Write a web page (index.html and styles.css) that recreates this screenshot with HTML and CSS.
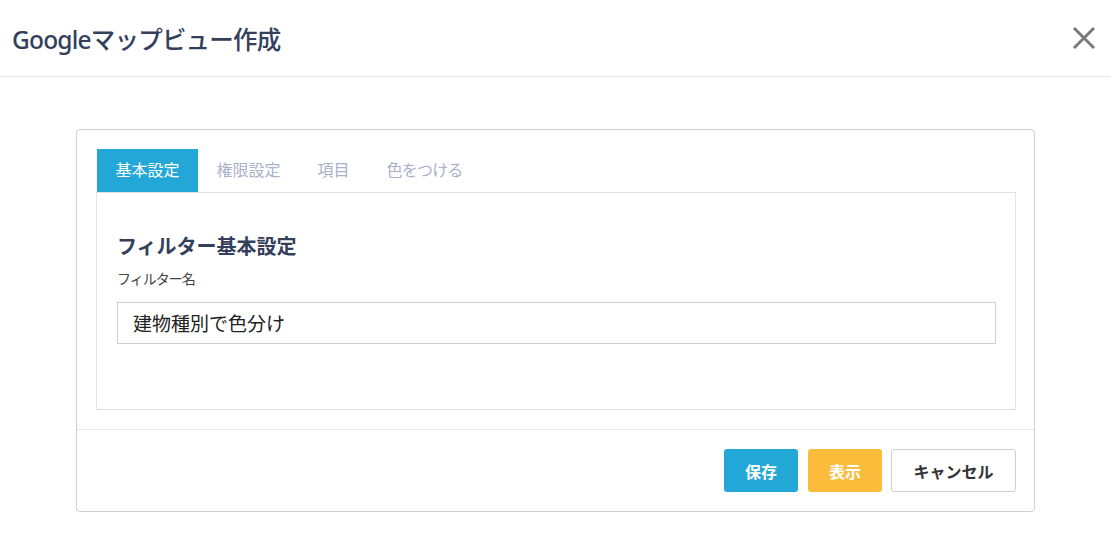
FILE: index.html
```html
<!DOCTYPE html>
<html lang="ja">
<head>
  <meta charset="UTF-8" />
  <meta name="viewport" content="width=device-width, initial-scale=1.0"/>
  <title>Googleマップビュー作成</title>
  <link rel="stylesheet" href="styles.css">
</head>
<body>
  <div class="modal-header">
    <h1 class="modal-title">Googleマップビュー作成</h1>
    <button class="close-btn" aria-label="閉じる">
      <svg width="24" height="24" viewBox="0 0 24 24">
        <path d="M2 2 L22 22 M22 2 L2 22" stroke="#7a7a7a" stroke-width="3" fill="none"/>
      </svg>
    </button>
  </div>

  <div class="modal-body">
    <div class="card">
      <div class="card-body">
        <ul class="tabs">
          <li class="tab active">基本設定</li>
          <li class="tab">権限設定</li>
          <li class="tab">項目</li>
          <li class="tab">色をつける</li>
        </ul>
        <div class="tab-pane">
          <h3 class="section-title">フィルター基本設定</h3>
          <label class="field-label" for="filterName">フィルター名</label>
          <input type="text" id="filterName" class="field-input" value="建物種別で色分け" />
        </div>
      </div>
      <div class="card-footer">
        <button class="btn btn-save">保存</button>
        <button class="btn btn-show">表示</button>
        <button class="btn btn-cancel">キャンセル</button>
      </div>
    </div>
  </div>
</body>
</html>
```

FILE: styles.css
```css
body {
  margin: 0;
  padding: 0;
  font-family: "Noto Sans", "Noto Sans CJK JP", sans-serif;
  background: #fff;
  color: #333;
}
.modal-header {
  height: 76px;
  border-bottom: 1px solid #e2e4ec;
  display: flex;
  align-items: center;
  justify-content: space-between;
  padding: 0 15px 0 12px;
}
.modal-title {
  margin: 0;
  font-size: 24.5px;
  font-weight: 500;
  color: #343f5c;
  letter-spacing: -0.8px;
}
.close-btn {
  background: none;
  border: none;
  padding: 0;
  cursor: pointer;
  display: flex;
}
.modal-body {
  padding: 52px 76px 0;
}
.card {
  border: 1px solid #cfcfcf;
  border-radius: 4px;
  background: #fff;
}
.card-body {
  padding: 19px 18px 19px 19px;
  border-bottom: 1px solid #e8e8ec;
}
.tabs {
  list-style: none;
  margin: 0 0 0 1px;
  padding: 0;
  display: flex;
}
.tab {
  height: 43px;
  line-height: 43px;
  padding: 0 18.5px;
  font-size: 16px;
  color: #aab1cb;
  cursor: pointer;
}
.tab:last-child {
  letter-spacing: -0.8px;
}
.tab.active {
  background: #22a7d7;
  color: #fff;
}
.tab-pane {
  border: 1px solid #e0e2ea;
  height: 216px;
  padding: 0 19px 0 20px;
}
.section-title {
  margin: 39px 0 0;
  font-size: 20px;
  font-weight: 700;
  color: #343f5c;
  line-height: 30px;
}
.field-label {
  display: block;
  margin-top: 7px;
  font-size: 14px;
  letter-spacing: -1px;
  color: #444;
  line-height: 20px;
}
.field-input {
  display: block;
  box-sizing: border-box;
  width: 100%;
  height: 42px;
  margin-top: 13px;
  padding: 0 15px;
  border: 1px solid #cfcfcf;
  border-radius: 0;
  outline: none;
  font-family: inherit;
  font-size: 19px;
  color: #222;
}
.card-footer {
  display: flex;
  justify-content: flex-end;
  gap: 10px;
  padding: 19px 18px 19px 19px;
}
.btn {
  height: 43px;
  padding: 0 20px;
  border: 1px solid transparent;
  border-radius: 3px;
  font-family: inherit;
  font-size: 16px;
  font-weight: 700;
  color: #fff;
  cursor: pointer;
}
.btn-save { background: #22a7d7; }
.btn-show { background: #fbbc3c; }
.btn-cancel {
  background: #fff;
  border-color: #cfcfcf;
  color: #333;
  padding: 0 21.5px;
  margin-left: -1px;
}
```
